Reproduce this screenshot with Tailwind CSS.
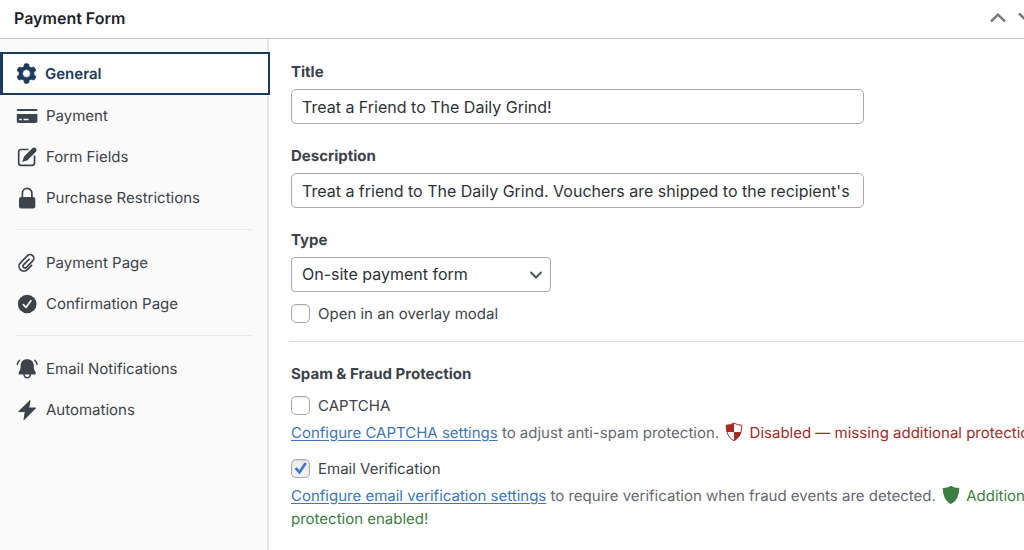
<!DOCTYPE html>
<html lang="en">

<head>
    <meta charset="UTF-8" />
    <meta name="viewport" content="width=device-width, initial-scale=1.0" />
    <title>Payment Form</title>
    <script src="https://cdn.jsdelivr.net/npm/@tailwindcss/browser@4"></script>
</head>

<body class="bg-white min-h-screen flex flex-col overflow-hidden font-['Inter','Liberation_Sans',sans-serif] text-[15px] leading-[23px] text-[#3c434a] [text-rendering:geometricPrecision]">

    <!-- Box header -->
    <header class="flex items-center justify-between h-[39px] pl-[14px] border-b border-[#c3c4c7]">
        <h1 class="pb-0.5 text-[16px] font-semibold text-[#1d2327]">Payment Form</h1>
        <div class="flex items-center gap-3 -mr-[10px]">
            <button type="button" aria-label="Move up" class="pb-0.5">
                <svg class="w-4 h-4" viewBox="0 0 16 16" fill="none" stroke="#787c82" stroke-width="2.5"><path d="M1 11.500 8 4.700 15 11.500" /></svg>
            </button>
            <button type="button" aria-label="Move down" class="pb-0.5">
                <svg class="w-4 h-4" viewBox="0 0 16 16" fill="none" stroke="#787c82" stroke-width="2.5"><path d="M1 3.500 8 10.300 15 3.500" /></svg>
            </button>
        </div>
    </header>

    <div class="flex flex-1">
        <!-- Settings tabs -->
        <nav class="w-[269px] shrink-0 pt-[13px] bg-[#fafafa] border-r-2 border-[#e5e5e5]">
            <a href="#general" class="flex items-center gap-2 h-[43px] -mr-[3px] pl-[13px] bg-white border-2 border-l-3 border-[#1b3a5c] text-[#1b3a5c] font-semibold relative">
                <svg class="w-[21px] h-[21px]" viewBox="0 0 24 24" fill="currentColor" fill-rule="evenodd">
                    <path d="M9.600 1.200Q12 .2 14.400 1.200L15 4.200 17.200 5.500 20.200 4.500Q22.300 6.200 22.700 8.700L20.400 10.700V13.300L22.700 15.300Q22.300 17.800 20.200 19.500L17.200 18.500 15 19.800 14.400 22.800Q12 23.800 9.600 22.800L9 19.800 6.800 18.500 3.800 19.500Q1.700 17.800 1.300 15.300L3.600 13.300V10.700L1.300 8.700Q1.700 6.200 3.800 4.500L6.800 5.500 9 4.200ZM12 7.500A4.500 4.500 0 1 0 12 16.500 4.500 4.500 0 1 0 12 7.500Z" stroke="currentColor" stroke-width=".8" stroke-linejoin="round" />
                </svg>
                General
            </a>
            <a href="#payment" class="flex items-center gap-2 h-[41px] pl-4">
                <svg class="w-[22px] h-[22px]" viewBox="0 0 22 22" fill="currentColor" fill-rule="evenodd">
                    <path d="M2.500 4H19.500A1.500 1.500 0 0 1 21.400 6H.8A1.500 1.500 0 0 1 2.500 4ZM.8 9H21.400V16.300Q21.400 18 19.700 18H2.500Q.8 18 .8 16.300ZM3.200 13.700V15.200H5.800V13.700ZM7.500 13.700V15.200H12.500V13.700Z" />
                </svg>
                Payment
            </a>
            <a href="#fields" class="flex items-center gap-2 h-[41px] pl-4">
                <svg class="w-[22px] h-[22px]" viewBox="0 0 22 22" fill="none" stroke="currentColor" stroke-width="1.700">
                    <path d="M12.500 3.500H5A2.300 2.300 0 0 0 2.700 5.800V17A2.300 2.300 0 0 0 5 19.300H16.200A2.300 2.300 0 0 0 18.500 17V9.500" />
                    <path d="M16.300 2.300Q18.200 .9 19.900 2.300 21.300 4 19.900 5.700L11.500 14.200 6.200 16.100 8.100 10.400Z" fill="currentColor" stroke="none" />
                </svg>
                Form Fields
            </a>
            <a href="#restrictions" class="flex items-center gap-2 h-[41px] pl-4">
                <svg class="w-[22px] h-[22px]" viewBox="0 0 22 22" fill="none" stroke="currentColor" stroke-width="1.700">
                    <rect x="3" y="10" width="16.300" height="11.500" rx="2.200" fill="currentColor" stroke="none" />
                    <path d="M6.400 11V6.200A4.750 4.750 0 0 1 15.900 6.200V11" />
                </svg>
                Purchase Restrictions
            </a>

            <hr class="ml-4 mr-[15px] mt-[11px] mb-3 border-[#e8e8e8]" />

            <a href="#payment-page" class="flex items-center gap-2 h-[41px] pl-4">
                <svg class="w-[22px] h-[22px]" viewBox="0 0 22 22" fill="none" stroke="currentColor" stroke-width="1.700" stroke-linecap="round">
                    <path d="M1.500 5H-4.500A4.900 4.900 0 0 1 -4.500 -4.800H5.500A3.700 3.700 0 0 1 5.500 2.600H-3.500A1.900 1.900 0 0 1 -3.500 -1.200H4" transform="translate(11 11) rotate(-45)" />
                </svg>
                Payment Page
            </a>
            <a href="#confirmation" class="flex items-center gap-2 h-[41px] pl-4">
                <svg class="w-[22px] h-[22px]" viewBox="0 0 22 22">
                    <circle cx="11.200" cy="11" r="9.300" fill="currentColor" />
                    <path d="m7.400 11.700 2.600 2.700 4.900-6.700" fill="none" stroke="#fafafa" stroke-width="1.700" stroke-linecap="round" stroke-linejoin="round" />
                </svg>
                Confirmation Page
            </a>

            <hr class="ml-4 mr-[15px] mt-[11px] mb-3 border-[#e8e8e8]" />

            <a href="#emails" class="flex items-center gap-2 h-[41px] pl-4">
                <svg class="w-[22px] h-[22px]" viewBox="0 0 22 22" fill="none" stroke="currentColor" stroke-width="1.500" stroke-linecap="round">
                    <path d="M11.200 1.200C7 1.200 4.800 3.700 4.700 7.300L4.500 10.500C4.400 12 2.600 13.500 2.600 15.300Q2.600 16.500 3.800 16.500H18.600Q19.800 16.500 19.800 15.300C19.800 13.500 18 12 17.900 10.500L17.700 7.300C17.600 3.700 15.400 1.200 11.200 1.200Z" fill="currentColor" stroke="none" />
                    <path d="M8 16.500Q8.500 19.800 11.200 19.800T14.400 16.500M3.500 2.300Q1.800 3.700 1.300 6.300M18.900 2.300Q20.600 3.700 21.100 6.300" />
                </svg>
                Email Notifications
            </a>
            <a href="#automations" class="flex items-center gap-2 h-[41px] pl-4">
                <svg class="w-[22px] h-[22px]" viewBox="0 0 22 22" fill="currentColor" stroke="currentColor" stroke-linejoin="round">
                    <path d="M14 1.500 2.700 12.600H9.300L8 20.700 19.600 9H12.700Z" />
                </svg>
                Automations
            </a>
        </nav>

        <!-- General tab -->
        <main class="flex-1 min-w-0 pt-[21px] pl-[22px]">
            <form>
                <div class="flex flex-col gap-[6px] mb-5">
                    <label for="title" class="font-bold">Title</label>
                    <input type="text" id="title" value="Treat a Friend to The Daily Grind!"
                        class="w-[573px] h-[35px] px-2.5 border border-[#a7aaad] rounded-[5px] text-[16px] text-[#2c3338]" />
                </div>

                <div class="flex flex-col gap-[6px] mb-5">
                    <label for="description" class="font-bold">Description</label>
                    <input type="text" id="description"
                        value="Treat a friend to The Daily Grind. Vouchers are shipped to the recipient's mailing address."
                        class="w-[573px] h-[35px] px-2.5 border border-[#a7aaad] rounded-[5px] text-[16px] text-[#2c3338]" />
                </div>

                <div class="flex flex-col gap-[6px] mb-[10px]">
                    <label for="type" class="font-bold">Type</label>
                    <div class="relative w-[260px]">
                        <select id="type" class="appearance-none w-full h-[35px] px-2.5 bg-white border border-[#a7aaad] rounded-[4px] text-[16px] text-[#2c3338]">
                            <option>On-site payment form</option>
                            <option>Off-site Stripe Checkout form</option>
                        </select>
                        <svg class="absolute right-2 top-[11px] w-[14px] h-[14px] pointer-events-none" viewBox="0 0 14 14" fill="none" stroke="#50575e" stroke-width="2"><path d="M1.500 4 7 9.500 12.500 4" /></svg>
                    </div>
                </div>

                <div class="flex items-center gap-2">
                    <input type="checkbox" id="overlay" class="appearance-none w-[19px] h-[19px] bg-white border border-[#a7aaad] rounded-[5px] shadow-[inset_0_1px_2px_rgba(0,0,0,0.1)]" />
                    <label for="overlay">Open in an overlay modal</label>
                </div>

                <hr class="mt-4 mb-5 -ml-0.5 border-[#dcdcde]" />

                <h2 class="mb-[9px] font-bold">Spam &amp; Fraud Protection</h2>

                <div class="flex items-center gap-2">
                    <input type="checkbox" id="captcha" class="appearance-none w-[19px] h-[19px] bg-white border border-[#a7aaad] rounded-[5px] shadow-[inset_0_1px_2px_rgba(0,0,0,0.1)]" />
                    <label for="captcha">CAPTCHA</label>
                </div>
                <p class="mt-1 mb-[13px] whitespace-nowrap text-[#646970]">
                    <a href="#captcha-settings" class="text-[#3e76b8] underline underline-offset-2">Configure CAPTCHA settings</a>
                    to adjust anti-spam protection.
                    <span class="ml-0.5 text-[#a72a25]">
                        <svg class="inline w-[18px] h-[20px] mr-0.5 -mt-1" viewBox="0 0 18 20">
                            <path d="M9 1Q6 3.200 1.200 3.200C1.200 10 3 15.500 9 18.700 15 15.500 16.800 10 16.800 3.200Q12 3.200 9 1Z" fill="none" stroke="currentColor" />
                            <path d="M9 1V10H1.900C1.300 8 1.200 5.500 1.200 3.200Q6 3.200 9 1ZM9 10H16.100C15 14 13 16.500 9 18.700Z" fill="currentColor" />
                        </svg>
                        Disabled — missing additional protection
                    </span>
                </p>

                <div class="flex items-center gap-2">
                    <div class="relative flex">
                        <input type="checkbox" id="verification" checked class="appearance-none w-[19px] h-[19px] bg-[#f0f0f1] border border-[#a7aaad] rounded-[5px] shadow-[inset_0_1px_2px_rgba(0,0,0,0.1)]" />
                        <svg class="absolute inset-0 w-[19px] h-[19px] pointer-events-none" viewBox="0 0 19 19" fill="#3e7ac4"><path d="M3.500 9.800 6 8.300 8.200 11.200 13.400 3.500 16 4.400 8.600 15.600Z" /></svg>
                    </div>
                    <label for="verification">Email Verification</label>
                </div>
                <p class="mt-1 whitespace-nowrap text-[#646970]">
                    <a href="#verification-settings" class="text-[#3e76b8] underline underline-offset-2">Configure email verification settings</a>
                    to require verification when fraud events are detected.
                    <span class="ml-0.5 text-[#3d7f42]">
                        <svg class="inline w-[18px] h-[20px] mr-0.5 -mt-1" viewBox="0 0 18 20" fill="currentColor">
                            <path d="M9 .8Q6 3 .8 3C.8 10 3 16 9 19 15 16 17.200 10 17.200 3Q12 3 9 .8Z" />
                        </svg>
                        Additional<br />protection enabled!
                    </span>
                </p>
            </form>
        </main>
    </div>

</body>

</html>
